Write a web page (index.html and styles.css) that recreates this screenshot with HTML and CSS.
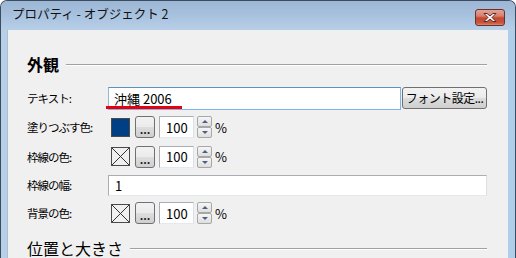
FILE: index.html
```html
<!DOCTYPE html>
<html>
<head>
    <title>プロパティ - オブジェクト 2</title>
    <meta charset="utf-8">
    <link rel="stylesheet" href="styles.css">
</head>

<body>
    <div class="window">
        <div class="titlebar">
            <span class="title">プロパティ - オブジェクト 2</span>
            <div class="close">
                <svg width="16" height="11" viewBox="0 0 16 11">
                    <path d="M2 1.5 L5 1.5 L8 4 L11 1.5 L14 1.5 L10 5.5 L14 9.5 L11 9.5 L8 7 L5 9.5 L2 9.5 L6 5.5 Z" fill="#fff" stroke="#5a2a24" stroke-width="1" stroke-linejoin="round"/>
                </svg>
            </div>
        </div>

        <div class="client">
            <div class="section-title"><span>外観</span></div>

            <div class="form-grid">
                <label>テキスト:</label>
                <div class="controls">
                    <div class="text-wrap">
                        <input class="field wide" type="text" value="沖縄 2006">
                        <div class="mark"></div>
                    </div>
                    <button class="btn font-btn">フォント設定...</button>
                </div>

                <label>塗りつぶす色:</label>
                <div class="controls">
                    <div class="swatch fill"></div>
                    <button class="btn dots">...</button>
                    <input class="field num" type="text" value="100">
                    <div class="spin"><span class="up"></span><span class="down"></span></div>
                    <span class="pct">%</span>
                </div>

                <label>枠線の色:</label>
                <div class="controls">
                    <div class="swatch none">
                        <svg width="17" height="17" viewBox="0 0 17 17"><path d="M0 0 L17 17 M17 0 L0 17" stroke="#333" stroke-width="1"/></svg>
                    </div>
                    <button class="btn dots">...</button>
                    <input class="field num" type="text" value="100">
                    <div class="spin"><span class="up"></span><span class="down"></span></div>
                    <span class="pct">%</span>
                </div>

                <label>枠線の幅:</label>
                <div class="controls">
                    <input class="field full" type="text" value="1">
                </div>

                <label>背景の色:</label>
                <div class="controls">
                    <div class="swatch none">
                        <svg width="17" height="17" viewBox="0 0 17 17"><path d="M0 0 L17 17 M17 0 L0 17" stroke="#333" stroke-width="1"/></svg>
                    </div>
                    <button class="btn dots">...</button>
                    <input class="field num" type="text" value="100">
                    <div class="spin"><span class="up"></span><span class="down"></span></div>
                    <span class="pct">%</span>
                </div>
            </div>

            <div class="section-title second"><span>位置と大きさ</span></div>
        </div>
    </div>
</body>
</html>
```

FILE: styles.css
```css
html, body {
    margin: 0;
    padding: 0;
    width: 516px;
    height: 258px;
    overflow: hidden;
    background: #ffffff;
    font-family: "Noto Sans CJK JP", "Noto Sans", sans-serif;
}

.window {
    box-sizing: border-box;
    width: 516px;
    height: 258px;
    overflow: hidden;
    border: 1px solid #3d4b5e;
    border-bottom: none;
    border-radius: 7px 7px 0 0;
    background: linear-gradient(to right, #b8cfe8 0px, #bcd3ec 40%, #b0cdec 100%);
    padding: 0 7px 0 6px;
}

.titlebar {
    height: 29px;
    display: flex;
    align-items: center;
    justify-content: space-between;
    margin: 0 -7px 0 -6px;
    padding: 0 10px 0 11px;
    background: linear-gradient(to bottom, #9cb6d5 0px, #a5bfdc 12px, #b8cfe8 29px);
    border-radius: 6px 6px 0 0;
}

.title {
    font-size: 12.5px;
    color: #111;
    margin-top: -4px;
}

.close {
    width: 28px;
    height: 15px;
    margin-top: 4px;
    border: 1px solid #6b3028;
    border-radius: 3px;
    background: linear-gradient(to bottom, #e2a397 0px, #d6806f 6px, #c4472f 8px, #c85540 13px, #dc8b78 15px);
    display: flex;
    align-items: center;
    justify-content: center;
}

.client {
    background: #f0f0f0;
    height: 240px;
    padding: 24px 21px 0 19px;
    border-left: 1px solid #a9bfd6;
}

.section-title {
    display: flex;
    align-items: center;
    height: 20px;
    font-size: 16px;
    font-weight: bold;
    color: #000;
}

.section-title::after {
    content: "";
    flex: 1;
    height: 1px;
    background: #a0a0a0;
    border-bottom: 1px solid #ffffff;
    margin-left: 7px;
    margin-top: 1px;
}

.section-title.second {
    font-weight: normal;
    margin-top: 11px;
}

.form-grid {
    display: grid;
    grid-template-columns: 81px 1fr;
    grid-template-rows: 29px 30px 29px 28px 28px;
    margin-top: 9px;
}

.form-grid label {
    display: flex;
    align-items: center;
    font-size: 11.5px;
    letter-spacing: -1px;
    color: #000;
}

.controls {
    display: flex;
    align-items: center;
}

.field {
    box-sizing: border-box;
    border: 1px solid #abadb3;
    border-right-color: #dbdfe6;
    border-bottom-color: #e3e9ef;
    background: #fff;
    font-family: "Noto Sans CJK JP", "Noto Sans", sans-serif;
    font-size: 13px;
    color: #000;
    padding: 0 5px;
    margin: 0;
    outline: none;
}

.text-wrap {
    position: relative;
}

.field.wide {
    width: 293px;
    height: 23px;
    border-color: #7eb4ea;
    border-top-color: #5c93bc;
    border-left-color: #90b8dd;
}

.field.full {
    width: 379px;
    height: 21px;
    padding-left: 6px;
}

.field.num {
    width: 35px;
    height: 22px;
    margin-left: 4px;
    padding-left: 6px;
}

.mark {
    position: absolute;
    left: -2px;
    top: 21px;
    width: 76px;
    height: 3px;
    background: #e8000b;
}

.btn {
    box-sizing: border-box;
    border: 1px solid #707070;
    border-radius: 3px;
    background: linear-gradient(to bottom, #f2f2f2 0%, #ebebeb 50%, #dddddd 51%, #cfcfcf 100%);
    font-family: "Noto Sans CJK JP", "Noto Sans", sans-serif;
    color: #000;
    padding: 0;
    margin: 0;
}

.font-btn {
    width: 85px;
    height: 22px;
    margin-left: 1px;
    font-size: 12px;
    letter-spacing: -0.5px;
}

.dots {
    width: 20px;
    height: 22px;
    margin-left: 5px;
    padding-top: 3px;
    font-size: 11px;
    font-weight: bold;
    line-height: 18px;
    color: #222;
}

.swatch {
    box-sizing: border-box;
    width: 19px;
    height: 19px;
    margin-left: 3px;
    border: 1px solid #4a4a4a;
}

.swatch.fill {
    background: #003f84;
}

.swatch.none {
    background: #f0f0f0;
}

.swatch svg {
    display: block;
}

.spin {
    display: flex;
    flex-direction: column;
    width: 15px;
    height: 22px;
    margin-left: 3px;
}

.spin span {
    box-sizing: border-box;
    flex: 1;
    border: 1px solid #a7a7a7;
    border-radius: 2px;
    background: linear-gradient(to bottom, #f6f6f6, #dedede);
    display: flex;
    align-items: center;
    justify-content: center;
}

.spin .up::after {
    content: "";
    border-left: 3px solid transparent;
    border-right: 3px solid transparent;
    border-bottom: 3px solid #4c5f80;
}

.spin .down::after {
    content: "";
    border-left: 3px solid transparent;
    border-right: 3px solid transparent;
    border-top: 3px solid #4c5f80;
}

.pct {
    margin-left: 3px;
    font-size: 13px;
    color: #000;
}
```
